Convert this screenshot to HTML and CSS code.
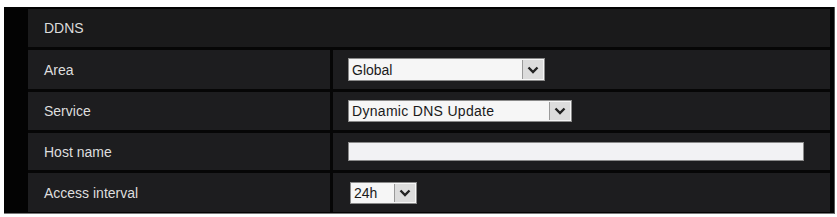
FILE: index.html
```html
<!DOCTYPE html>
<html>
<head>
<meta charset="utf-8">
<link rel="stylesheet" href="styles.css">
</head>
<body>
<div class="frame">
  <div class="panel">
    <div class="head">DDNS</div>
    <div class="label">Area</div>
    <div class="value">
      <div class="select w-area"><span class="sel-text">Global</span><span class="arrow"><svg width="12" height="8" viewBox="0 0 12 8"><path d="M1.5 1.5 L6 6 L10.5 1.5" fill="none" stroke="#222" stroke-width="2.4"/></svg></span></div>
    </div>
    <div class="label">Service</div>
    <div class="value">
      <div class="select w-service"><span class="sel-text">Dynamic DNS Update</span><span class="arrow"><svg width="12" height="8" viewBox="0 0 12 8"><path d="M1.5 1.5 L6 6 L10.5 1.5" fill="none" stroke="#222" stroke-width="2.4"/></svg></span></div>
    </div>
    <div class="label">Host name</div>
    <div class="value">
      <div class="input"></div>
    </div>
    <div class="label">Access interval</div>
    <div class="value">
      <div class="select w-interval"><span class="sel-text">24h</span><span class="arrow"><svg width="12" height="8" viewBox="0 0 12 8"><path d="M1.5 1.5 L6 6 L10.5 1.5" fill="none" stroke="#222" stroke-width="2.4"/></svg></span></div>
    </div>
  </div>
</div>
</body>
</html>
```
FILE: styles.css
```css
html, body {
  margin: 0;
  padding: 0;
  background: #ffffff;
}
body {
  font-family: "Liberation Sans", Arial, sans-serif;
  font-size: 14px;
}
.frame {
  margin: 7px 0 0 4px;
  width: 831px;
  height: 207px;
  box-sizing: border-box;
  background: #030303;
  padding: 2px 4px 2px 24px;
  border-right: 1px solid #555;
  border-bottom: 1px solid #777;
}
.panel {
  display: grid;
  grid-template-columns: 302px 1fr;
  grid-template-rows: 38px 39px 38px 37px 39px;
  gap: 3px;
  background: #060606;
}
.head {
  grid-column: 1 / 3;
  background: #1a1a1b;
  color: #dcdcdc;
  display: flex;
  align-items: center;
  padding-left: 16px;
}
.label {
  background: #1d1d1f;
  color: #dedede;
  display: flex;
  align-items: center;
  padding-left: 16px;
}
.value {
  background: #1d1d1f;
  display: flex;
  align-items: center;
  padding-left: 15px;
}
.select {
  display: flex;
  align-items: stretch;
  background: #f6f6f6;
  border: 1px solid #8a8a8a;
  box-sizing: border-box;
  height: 23px;
  color: #1a1a1a;
}
.sel-text {
  flex: 1;
  display: flex;
  align-items: center;
  padding-left: 3px;
}
.arrow {
  width: 20px;
  display: flex;
  align-items: center;
  justify-content: center;
  background: #dcdcdc;
  border-left: 1px solid #9a9a9a;
  margin: 1px;
}
.w-area { width: 197px; }
.w-service { width: 224px; height: 22px; }
.w-service .sel-text { letter-spacing: 0.3px; }
.w-interval { width: 67px; height: 22px; margin-left: 2px; }
.input {
  width: 456px;
  height: 19px;
  box-sizing: border-box;
  background: #f2f2f4;
  border: 1px solid #8a8a8a;
}
```
